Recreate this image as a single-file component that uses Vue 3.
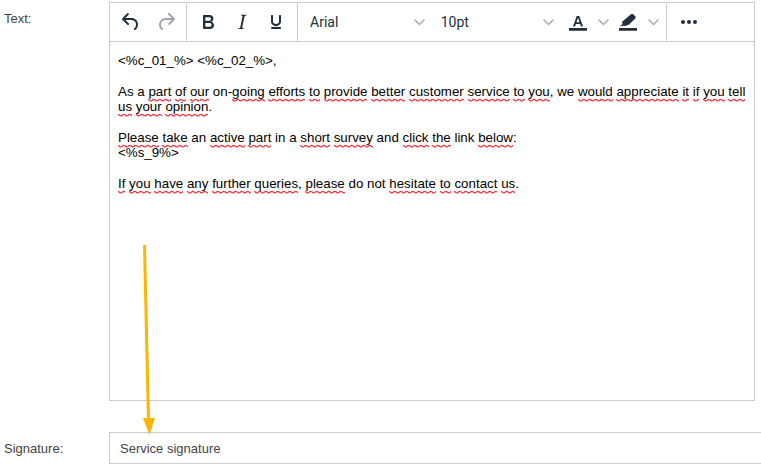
<script setup>
const C = '#222f3e'
</script>

<template>
  <div class="page">
    <div class="row text-row">
      <div class="label">Text:</div>
      <div class="editor">
        <div class="toolbar">
          <div class="group g1">
            <button class="btn"><svg width="24" height="24" viewBox="0 0 24 24"><path :fill="C" d="M6.4 8H12c3.7 0 6.2 2 6.8 5.1.6 2.7-.4 5.6-2.3 6.8a1 1 0 0 1-1-1.8c1.1-.6 1.8-2.7 1.4-4.6-.5-2.1-2.1-3.5-4.9-3.5H6.4l3.3 3.3a1 1 0 1 1-1.4 1.4l-5-5a1 1 0 0 1 0-1.4l5-5a1 1 0 0 1 1.4 1.4L6.4 8z"/></svg></button>
            <button class="btn"><svg width="24" height="24" viewBox="0 0 24 24"><path fill="#a0a5ab" d="M17.6 10H12c-2.8 0-4.4 1.4-4.9 3.5-.4 2 .3 4 1.4 4.6a1 1 0 1 1-1 1.8c-1.9-1.2-2.9-4.1-2.3-6.8C6.3 9.9 8.9 8 12 8h5.6l-3.3-3.3a1 1 0 1 1 1.4-1.4l5 5a1 1 0 0 1 0 1.4l-5 5a1 1 0 0 1-1.4-1.4l3.3-3.3z"/></svg></button>
          </div>
          <div class="group g2">
            <button class="btn"><svg width="24" height="24" viewBox="0 0 24 24"><path :fill="C" d="M7.8 19c-.3 0-.5 0-.6-.2l-.2-.5V5.7c0-.2 0-.4.2-.5l.6-.2h5c1.5 0 2.7.3 3.5 1 .7.6 1.1 1.4 1.1 2.5a3 3 0 0 1-.6 1.9c-.4.6-1 1-1.6 1.2.4.1.9.3 1.3.6s.8.7 1 1.2c.4.4.5 1 .5 1.6 0 1.3-.4 2.3-1.3 3-.8.7-2.1 1-3.8 1H7.8zm5-8.3c.6 0 1.2-.1 1.6-.5.4-.3.6-.7.6-1.3 0-1.1-.8-1.7-2.3-1.7H9.3v3.5h3.4zm.5 6c.7 0 1.3-.1 1.7-.4.4-.4.6-.9.6-1.5s-.2-1-.7-1.4c-.4-.3-1-.4-2-.4H9.4v3.8h4z"/></svg></button>
            <button class="btn"><svg width="24" height="24" viewBox="0 0 24 24"><path :fill="C" d="M16.7 4.7l-.1.9h-.3c-.6 0-1 0-1.4.3-.3.3-.4.6-.5 1.1l-2.1 9.8v.6c0 .5.4.8 1.4.8h.2l-.2.8H8l.2-.8h.2c1.1 0 1.800-.5 2-1.500l2-9.800.1-.5c0-.6-.4-.8-1.400-.8h-.3l.2-.9h5.800z"/></svg></button>
            <button class="btn"><svg width="24" height="24" viewBox="0 0 24 24"><path :fill="C" d="M16 5c.6 0 1 .4 1 1v5.500a4 4 0 0 1-.4 1.800l-1 1.400a5.300 5.300 0 0 1-5.500 1 5 5 0 0 1-1.600-1c-.5-.4-.8-.9-1.100-1.400a4 4 0 0 1-.4-1.800V6c0-.6.4-1 1-1s1 .4 1 1v5.500c0 .3 0 .6.2 1l.6.7a3.300 3.300 0 0 0 2.200.8 3.400 3.400 0 0 0 2.200-.8c.3-.2.4-.5.6-.8l.2-.9V6c0-.6.4-1 1-1zM8 17h8c.6 0 1 .4 1 1s-.4 1-1 1H8a1 1 0 0 1 0-2z"/></svg></button>
          </div>
          <div class="group g3">
            <div class="select family">
              <span>Arial</span>
              <svg class="chev" width="11" height="10" viewBox="0 0 11 10"><path d="M0.500 2.500l5 5 5-5" /></svg>
            </div>
            <div class="select size">
              <span>10pt</span>
              <svg class="chev" width="11" height="10" viewBox="0 0 11 10"><path d="M0.500 2.500l5 5 5-5" /></svg>
            </div>
            <div class="split first">
              <svg width="24" height="24" viewBox="0 0 24 24"><path :fill="C" d="M3 18h18v2.800H3V18zM10.700 6h2.600l3.700 10.500h-2l-.9-2.600H9.900L9 16.500H7L10.700 6zm-.2 6.200h3L12 7.800l-1.500 4.400z"/></svg>
              <svg class="chev" width="11" height="10" viewBox="0 0 11 10"><path d="M0.500 2.500l5 5 5-5" /></svg>
            </div>
            <div class="split">
              <svg width="24" height="24" viewBox="0 0 24 24"><path :fill="C" d="M3 18h18v2.800H3V18zM15 4.200a1.600 1.600 0 0 1 2.200 0l2.100 2.100a1.600 1.600 0 0 1 0 2.200l-6.800 6.500-1.500.1-.9.8-2.800-.1L3.500 16.500l2.900-2.300-.2-2.600 1.400-1.200L15 4.200z"/></svg>
              <svg class="chev" width="11" height="10" viewBox="0 0 11 10"><path d="M0.500 2.500l5 5 5-5" /></svg>
            </div>
          </div>
          <div class="group g4">
            <button class="btn"><svg width="24" height="24" viewBox="0 0 24 24"><path :fill="C" d="M6 10a2 2 0 0 0-2 2c0 1.100.9 2 2 2a2 2 0 0 0 2-2 2 2 0 0 0-2-2zm12 0a2 2 0 0 0-2 2c0 1.100.9 2 2 2a2 2 0 0 0 2-2 2 2 0 0 0-2-2zm-6 0a2 2 0 0 0-2 2c0 1.100.9 2 2 2a2 2 0 0 0 2-2 2 2 0 0 0-2-2z"/></svg></button>
          </div>
        </div>
        <div class="content">
          <p>&lt;%c_01_%&gt; &lt;%c_02_%&gt;,</p>
          <p class="gap">As a <u>part</u> <u>of</u> <u>our</u> on-<u>going</u> <u>efforts</u> <u>to</u> <u>provide</u> <u>better</u> <u>customer</u> <u>service</u> <u>to</u> <u>you</u>, we <u>would</u> <u>appreciate</u> <u>it</u> <u>if</u> <u>you</u> <u>tell</u> <u>us</u> <u>your</u> <u>opinion</u>.</p>
          <p class="gap"><u>Please</u> <u>take</u> an <u>active</u> <u>part</u> in a <u>short</u> <u>survey</u> and <u>click</u> <u>the</u> link <u>below</u>:<br>&lt;%s_9%&gt;</p>
          <p class="gap"><u>If</u> <u>you</u> <u>have</u> <u>any</u> <u>further</u> <u>queries</u>, <u>please</u> do not <u>hesitate</u> <u>to</u> <u>contact</u> <u>us</u>.</p>
        </div>
      </div>
    </div>
    <div class="row sig-row">
      <div class="label">Signature:</div>
      <div class="input">Service signature</div>
    </div>
    <svg class="arrow" width="761" height="467" viewBox="0 0 761 467">
      <path d="M144.500 245L148.500 420" stroke="#ffb400" stroke-width="3" fill="none"/>
      <path d="M143 418L155 418L149.500 435Z" fill="#ffb400"/>
    </svg>
  </div>
</template>

<style>
html, body { margin: 0; background: #fff; }
</style>

<style scoped>
.page {
  position: relative;
  width: 761px;
  height: 467px;
  overflow: hidden;
  padding-top: 2px;
  box-sizing: border-box;
  font-family: "Liberation Sans", Arial, sans-serif;
  background: #fff;
}
.row { display: flex; }
.label {
  width: 105px;
  padding-left: 4px;
  flex: none;
  font-size: 13px;
  color: #444;
}
.text-row .label { padding-top: 9px; line-height: 15px; }
.editor {
  width: 644px;
  height: 397px;
  border: 1px solid #ccc;
  flex: none;
  display: flex;
  flex-direction: column;
}
.toolbar {
  display: flex;
  height: 38px;
  border-bottom: 1px solid #ccc;
  flex: none;
}
.group {
  display: flex;
  align-items: center;
  border-right: 1px solid #ccc;
  box-sizing: border-box;
}
.g1 { width: 77px; padding-left: 3px; }
.g2 { width: 111px; padding-left: 4px; }
.g2 .btn { width: 34px; }
.g3 { width: 369px; }
.g4 { flex: 1; border-right: 0; padding-left: 4px; }
.btn {
  width: 35px;
  height: 34px;
  padding: 0;
  border: 0;
  background: none;
  display: flex;
  align-items: center;
  justify-content: center;
}
.select {
  display: flex;
  align-items: center;
  justify-content: space-between;
  box-sizing: border-box;
  font-family: Roboto, sans-serif;
  font-size: 14px;
  color: #222f3e;
}
.family { width: 131px; padding: 0 4px 0 12px; }
.size { width: 130px; padding: 0 4px 0 12px; }
.split { display: flex; align-items: center; gap: 8px; width: 50px; }
.first { margin-left: 8px; }
.chev { flex: none; }
.chev path { fill: none; stroke: #a7abb1; stroke-width: 1.5; }
.content {
  padding: 11px 0 0 8px;
  font-size: 13.33px;
  color: #000;
  line-height: 15.33px;
}
p { margin: 0; }
.gap { margin-top: 15.33px; }
u {
  text-decoration: none;
  padding-bottom: 3px;
  background-image: url("data:image/svg+xml,%3Csvg xmlns='http://www.w3.org/2000/svg' width='6' height='4'%3E%3Cpath d='M0 1.500C1.500 1.500 1.500 3 3 3S4.500 1 6 1.500' fill='none' stroke='%23f5222d' stroke-width='1.2'/%3E%3C/svg%3E");
  background-repeat: repeat-x;
  background-position: left bottom;
  background-size: 6px 4px;
}
.sig-row { margin-top: 31px; }
.sig-row .label { line-height: 33px; }
.input {
  flex: 1;
  height: 32px;
  border: 1px solid #ccc;
  border-right: 0;
  box-sizing: border-box;
  padding-left: 10px;
  line-height: 31px;
  font-size: 13px;
  color: #444;
  margin-right: -10px;
}
.arrow { position: absolute; left: 0; top: 0; pointer-events: none; }
</style>
